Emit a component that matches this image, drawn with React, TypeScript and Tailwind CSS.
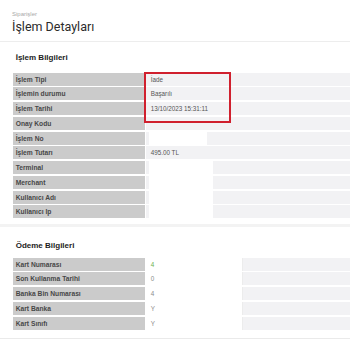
import React from 'react';

type Row = { label: string; value?: string; mask?: 'short' | 'wide' };

const islemRows: Row[] = [
  { label: 'İşlem Tipi', value: 'İade' },
  { label: 'İşlemin durumu', value: 'Başarılı' },
  { label: 'İşlem Tarihi', value: '13/10/2023 15:31:11' },
  { label: 'Onay Kodu' },
  { label: 'İşlem No', mask: 'short' },
  { label: 'İşlem Tutarı', value: '495.00 TL' },
  { label: 'Terminal', mask: 'wide' },
  { label: 'Merchant', mask: 'wide' },
  { label: 'Kullanıcı Adı', mask: 'wide' },
  { label: 'Kullanıcı Ip', mask: 'wide' },
];

const odemeRows = [
  { label: 'Kart Numarası', value: '4', green: true },
  { label: 'Son Kullanma Tarihi', value: '0' },
  { label: 'Banka Bin Numarası', value: '4' },
  { label: 'Kart Banka', value: 'Y' },
  { label: 'Kart Sınıfı', value: 'Y' },
];

function Label({ text }: { text: string }) {
  return (
    <div className="flex items-center bg-[#cbcbcb] pl-[3px] text-[6.7px] font-bold leading-[13px] text-[#474747]">
      {text}
    </div>
  );
}

export default function App() {
  return (
    <div className="h-[350px] w-[350px] overflow-hidden bg-white font-['Liberation_Sans',Arial,sans-serif]">
      <div className="border-b border-[#ededed] px-[12px] pb-[6px] pt-[10px]">
        <p className="text-[6px] leading-[8px] text-[#a9a9a9]">Siparişler</p>
        <h1 className="mt-[1px] font-['Roboto',sans-serif] text-[12.5px] leading-[16px] text-[#2b2b2b]">
          İşlem Detayları
        </h1>
      </div>

      <section className="border-b-[3px] border-[#f3f3f3] pb-[6px] pl-[12.7px] pt-[11px]">
        <h2 className="ml-[3px] text-[8px] font-bold leading-[10px] text-[#1c1c1c]">İşlem Bilgileri</h2>
        <div className="relative mt-[9.7px] grid auto-rows-[13px] grid-cols-[132px_1fr] gap-x-[1px] gap-y-[1.75px]">
          {islemRows.map((r) => (
            <React.Fragment key={r.label}>
              <Label text={r.label} />
              <div className="flex items-center bg-[#f2f2f4] pl-[5px] text-[6.3px] leading-[13px] text-[#555]">
                {r.value}
                {r.mask === 'short' && <div className="-ml-[2px] h-full w-[58px] bg-white" />}
                {r.mask === 'wide' && <div className="-ml-[2px] h-[calc(100%+1.75px)] w-[64px] self-start bg-white" />}
              </div>
            </React.Fragment>
          ))}
          <div className="pointer-events-none absolute left-[131.3px] top-[-1px] h-[51px] w-[87px] border-2 border-[#d0202e]" />
        </div>
      </section>

      <section className="border-b border-[#eaeaea] pb-[8px] pl-[12.7px] pt-[13.7px]">
        <h2 className="ml-[3px] text-[8px] font-bold leading-[10px] text-[#1c1c1c]">Ödeme Bilgileri</h2>
        <div className="mt-[6.6px] grid auto-rows-[13px] grid-cols-[132px_95px_1fr] gap-x-[1px] gap-y-[1.75px]">
          {odemeRows.map((r) => (
            <React.Fragment key={r.label}>
              <Label text={r.label} />
              <div
                className={`flex items-center bg-white pl-[5px] text-[6.3px] leading-[13px] ${
                  r.green ? 'text-[#6ab04c]' : 'text-[#8a8a8a]'
                }`}
              >
                {r.value}
              </div>
              <div className="border-l border-[#ececec] bg-[#f2f2f4]" />
            </React.Fragment>
          ))}
        </div>
      </section>
    </div>
  );
}
